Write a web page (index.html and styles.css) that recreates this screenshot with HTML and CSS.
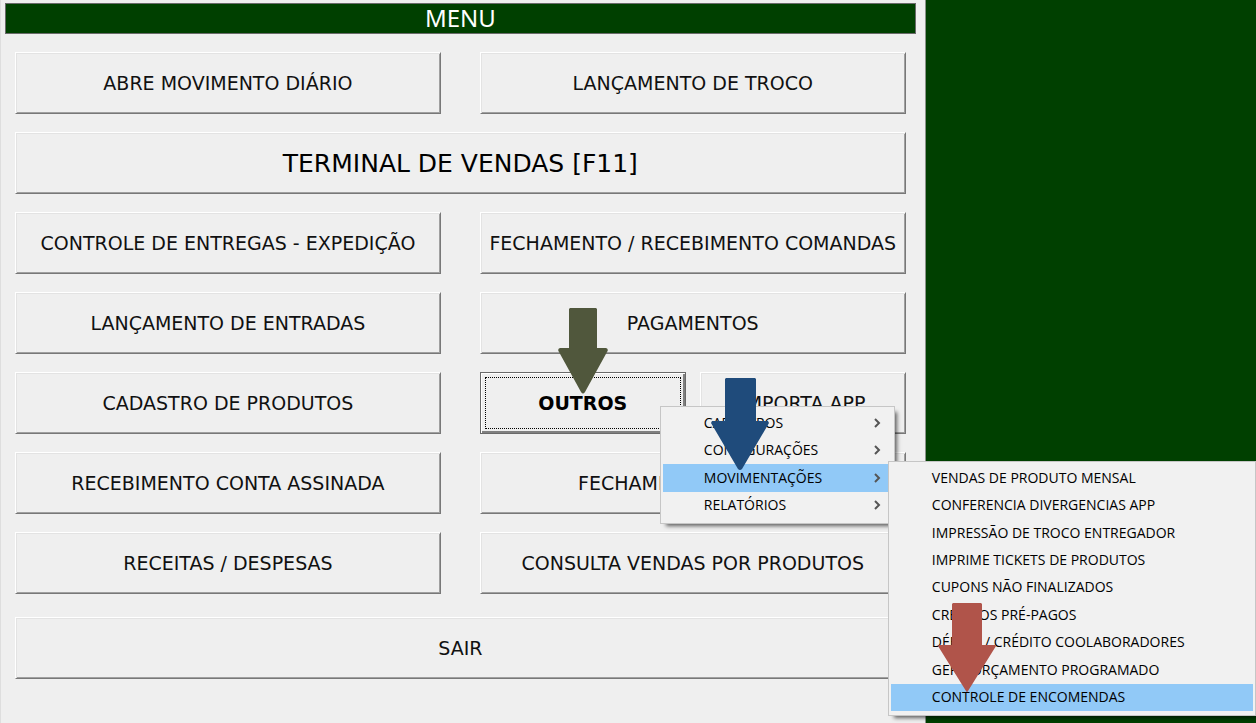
FILE: index.html
```html
<!DOCTYPE html>
<html lang="pt-BR">
<head>
<meta charset="utf-8">
<title>Menu</title>
<link rel="stylesheet" href="styles.css">
</head>
<body>
<main class="panel">
  <h1 class="title">MENU</h1>
  <div class="buttons">
    <button class="btn">ABRE MOVIMENTO DIÁRIO</button>
    <button class="btn">LANÇAMENTO DE TROCO</button>
    <button class="btn wide large">TERMINAL DE VENDAS [F11]</button>
    <button class="btn">CONTROLE DE ENTREGAS - EXPEDIÇÃO</button>
    <button class="btn">FECHAMENTO / RECEBIMENTO COMANDAS</button>
    <button class="btn">LANÇAMENTO DE ENTRADAS</button>
    <button class="btn">PAGAMENTOS</button>
    <button class="btn">CADASTRO DE PRODUTOS</button>
    <div class="split">
      <div class="anchor">
        <button class="btn focused"><span class="focus-ring">OUTROS</span></button>
        <svg class="arrow arrow-green" width="50" height="87" viewBox="0 0 50 87"><path d="M12 0H38L39 1V40H48Q51 41 49 44L27 84Q25 87 23 84L1 44Q-1 41 2 40H11V1Z"/></svg>
        <div class="menu main-menu" role="menu">
          <button class="item" role="menuitem">CADASTROS<svg class="chevron" width="8" height="10" viewBox="0 0 8 10"><path d="M1 1L5 5L1 9"/></svg></button>
          <button class="item" role="menuitem">CONFIGURAÇÕES<svg class="chevron" width="8" height="10" viewBox="0 0 8 10"><path d="M1 1L5 5L1 9"/></svg></button>
          <button class="item selected" role="menuitem">MOVIMENTAÇÕES<svg class="chevron" width="8" height="10" viewBox="0 0 8 10"><path d="M1 1L5 5L1 9"/></svg></button>
          <button class="item" role="menuitem">RELATÓRIOS<svg class="chevron" width="8" height="10" viewBox="0 0 8 10"><path d="M1 1L5 5L1 9"/></svg></button>
          <svg class="arrow arrow-blue" width="58" height="93" viewBox="0 0 58 93"><path d="M15 0H44L45 1V43H57L58 45L31 91Q29 93 27 91L0 45L1 43H14V1Z"/></svg>
          <div class="menu sub-menu" role="menu">
            <button class="item" role="menuitem">VENDAS DE PRODUTO MENSAL</button>
            <button class="item" role="menuitem">CONFERENCIA DIVERGENCIAS APP</button>
            <button class="item" role="menuitem">IMPRESSÃO DE TROCO ENTREGADOR</button>
            <button class="item" role="menuitem">IMPRIME TICKETS DE PRODUTOS</button>
            <button class="item" role="menuitem">CUPONS NÃO FINALIZADOS</button>
            <button class="item" role="menuitem">CREDITOS PRÉ-PAGOS</button>
            <button class="item" role="menuitem">DÉBITO / CRÉDITO COOLABORADORES</button>
            <button class="item" role="menuitem">GERA ORÇAMENTO PROGRAMADO</button>
            <button class="item selected" role="menuitem">CONTROLE DE ENCOMENDAS</button>
            <svg class="arrow arrow-red" width="58" height="90" viewBox="0 0 58 90"><path d="M15 0H43L44 1V42H57L58 43L30 88Q29 90 28 88L0 43L1 42H14V1Z"/></svg>
          </div>
        </div>
      </div>
      <button class="btn">IMPORTA APP</button>
    </div>
    <button class="btn">RECEBIMENTO CONTA ASSINADA</button>
    <button class="btn">FECHAMENTO DE CAIXA</button>
    <button class="btn">RECEITAS / DESPESAS</button>
    <button class="btn">CONSULTA VENDAS POR PRODUTOS</button>
    <button class="btn wide exit">SAIR</button>
  </div>
</main>
</body>
</html>
```
FILE: styles.css
```css
* {
  box-sizing: border-box;
}

body {
  margin: 0;
  min-height: 100vh;
  display: flex;
  overflow: hidden;
  background: #004000;
  font-family: "DejaVu Sans", sans-serif;
}

.panel {
  width: 73.7%;
  min-height: 100vh;
  padding: 3px 9px 0 4px;
  background: #efefef;
  border-left: 1px solid #dedede;
  border-right: 1px solid #8a938a;
}

.title {
  margin: 0;
  padding-bottom: 2px;
  border: 1px solid #6a6a6a;
  background: #004000;
  color: #fff;
  font-family: "Noto Sans", sans-serif;
  font-size: 24px;
  font-weight: 400;
  line-height: 27px;
  text-align: center;
}

.buttons {
  display: grid;
  grid-template-columns: minmax(0, 1fr) minmax(0, 1fr);
  gap: 18px 39px;
  padding: 18px 10px 0 10px;
}

.btn {
  width: 100%;
  height: 62px;
  padding: 0;
  border: 1px solid;
  border-color: #fff #787878 #787878 #fff;
  background: #efefef;
  box-shadow: inset 1px 1px #e3e3e3, inset -1px -1px #a0a0a0;
  color: #111;
  font-family: inherit;
  font-size: 19px;
  white-space: nowrap;
}

.wide {
  grid-column: 1 / -1;
}

.large {
  font-size: 25px;
  color: #000;
}

.exit {
  margin-top: 5px;
}

.split {
  display: grid;
  grid-template-columns: minmax(0, 1fr) minmax(0, 1fr);
  gap: 14px;
}

.anchor {
  position: relative;
}

.focused {
  padding: 2px;
  border: 1px solid #6a6a6a;
  box-shadow: inset 1px 1px #fff, inset -2px -2px #808080;
  font-weight: 700;
  color: #000;
}

.focus-ring {
  display: flex;
  align-items: center;
  justify-content: center;
  height: 52px;
  margin: 0 2px;
  border: 1px dotted #000;
}

.menu {
  position: absolute;
  display: flex;
  flex-direction: column;
  padding: 2px 2px 4px;
  background: #f1f1f1;
  border: 1px solid #c6c6c6;
  box-shadow: 4px 4px 4px -2px rgba(0, 0, 0, 0.6);
}

.main-menu {
  z-index: 10;
  top: 34px;
  left: 180px;
  width: 235px;
  height: 118px;
}

.sub-menu {
  top: 54px;
  left: 227px;
  width: 368px;
  height: 255px;
}

.item {
  flex: 1;
  display: flex;
  align-items: center;
  justify-content: space-between;
  padding: 0 10px 0 41px;
  border: 0;
  background: transparent;
  color: #000;
  font-family: "Open Sans", sans-serif;
  font-size: 14px;
  line-height: 20px;
  white-space: nowrap;
}

.selected {
  background: #91c9f7;
}

.chevron {
  fill: none;
  stroke: #555;
  stroke-width: 2;
}

.arrow {
  position: absolute;
}

.arrow-green {
  top: -64px;
  left: 78px;
  fill: #50573c;
}

.arrow-blue {
  top: -29px;
  left: 50px;
  fill: #1f4b7b;
}

.arrow-red {
  top: 141px;
  left: 49px;
  fill: #b0544a;
}
```
